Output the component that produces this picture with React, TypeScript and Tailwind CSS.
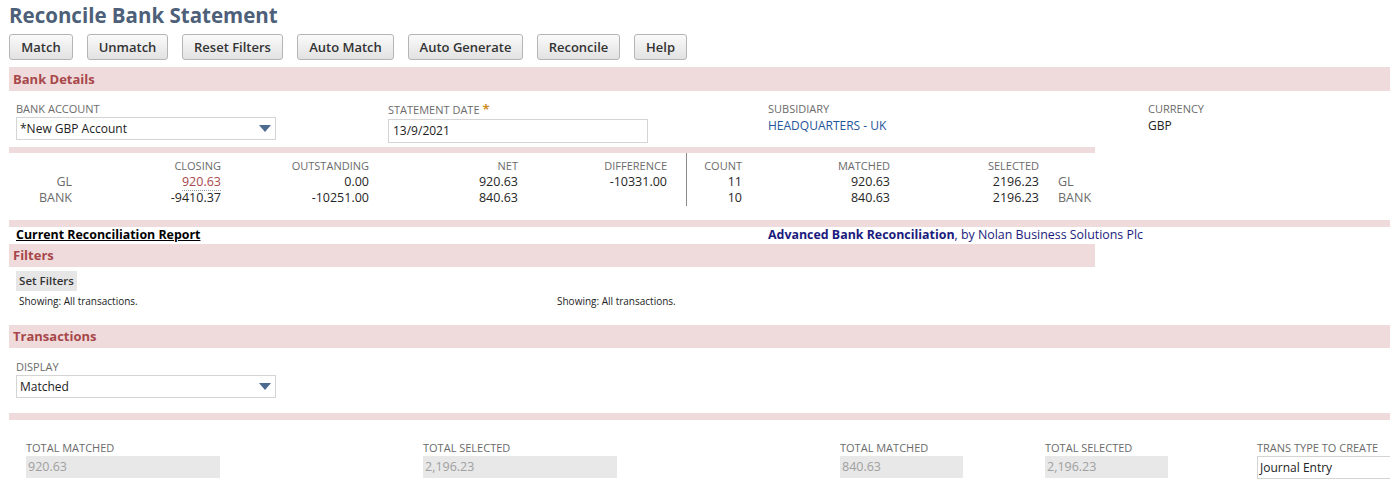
import React from 'react';

const buttons = [
  { label: 'Match', w: 'w-[64px]' },
  { label: 'Unmatch', w: 'w-[81px]' },
  { label: 'Reset Filters', w: 'w-[101px]' },
  { label: 'Auto Match', w: 'w-[97px]' },
  { label: 'Auto Generate', w: 'w-[115px]' },
  { label: 'Reconcile', w: 'w-[83px]' },
  { label: 'Help', w: 'w-[53px]' },
];

const Caret = () => (
  <svg width="12" height="7" viewBox="0 0 12 7" className="shrink-0">
    <polygon points="0,0 12,0 6,7" fill="#4d6a8f" />
  </svg>
);

const Band: React.FC<{ title?: string; className?: string }> = ({ title, className }) => (
  <div className={`bg-[#efdbdc] flex items-center pl-[4px] ${className ?? ''}`}>
    {title && <span className="text-[13px] font-bold text-[#a8474a] leading-none">{title}</span>}
  </div>
);

const Label: React.FC<{ children: React.ReactNode }> = ({ children }) => (
  <div className="text-[11px] uppercase text-[#6b6b6b] leading-[14px]">{children}</div>
);

const Select: React.FC<{ value: string; h: string }> = ({ value, h }) => (
  <div className={`w-[260px] ${h} border border-[#d4d4d4] bg-white flex items-center justify-between pl-[3px] pr-[4px]`}>
    <span className="text-[12px] text-[#222]">{value}</span>
    <Caret />
  </div>
);

const Total: React.FC<{ label: string; value: string; w: string; ml: string }> = ({ label, value, w, ml }) => (
  <div className={`${ml} shrink-0`}>
    <Label>{label}</Label>
    <div className={`${w} h-[22px] mt-[1px] bg-[#e8e8e8] flex items-center pl-[2px] text-[12.5px] text-[#a0a0a0]`}>
      {value}
    </div>
  </div>
);

export default function App() {
  return (
    <div className="w-[1390px] h-[494px] overflow-hidden bg-white font-['Open_Sans',sans-serif] text-[#262626]">
      {/* Title */}
      <h1 className="pl-[9px] pt-[1px] text-[20.5px] font-bold leading-[28px] text-[#4d5f79]">
        Reconcile Bank Statement
      </h1>

      {/* Buttons */}
      <div className="flex pl-[9px] mt-[5px] gap-[14px]">
        {buttons.map((b) => (
          <button
            key={b.label}
            className={`${b.w} h-[26px] rounded-[3px] border border-[#b5b5b5] bg-gradient-to-b from-[#fafafa] to-[#e2e2e2] text-[13px] font-semibold text-[#333] leading-none`}
          >
            {b.label}
          </button>
        ))}
      </div>

      {/* Bank Details */}
      <div className="pl-[9px] mt-[7px]">
        <Band title="Bank Details" className="h-[24px]" />
      </div>

      <div className="flex pl-[16px] pt-[11px]">
        <div className="w-[372px]">
          <Label>Bank Account</Label>
          <div className="mt-[1px]">
            <Select value="*New GBP Account" h="h-[23px]" />
          </div>
        </div>
        <div className="w-[380px]">
          <Label>
            Statement Date <span className="text-[#d38f1f] text-[13px] font-bold">*</span>
          </Label>
          <div className="mt-[2px] w-[260px] h-[24px] border border-[#d4d4d4] flex items-center pl-[4px] text-[12px] text-[#222]">
            13/9/2021
          </div>
        </div>
        <div className="w-[380px]">
          <Label>Subsidiary</Label>
          <div className="text-[12px] text-[#255599] leading-[18px] mt-[1px]">HEADQUARTERS - UK</div>
        </div>
        <div>
          <Label>Currency</Label>
          <div className="text-[12px] text-[#222] leading-[18px] mt-[1px]">GBP</div>
        </div>
      </div>

      <div className="pl-[9px] mt-[4px]">
        <div className="w-[1086px] h-[6px] bg-[#efdbdc]" />
      </div>

      {/* Summary */}
      <div className="flex pt-[5px] text-[12.5px] leading-[16px]">
        <div className="w-[72px] text-right text-[#6b6b6b] pt-[16px]">
          <div>GL</div>
          <div>BANK</div>
        </div>
        <div className="w-[149px] text-right">
          <div className="text-[11px] text-[#6b6b6b]">CLOSING</div>
          <div>
            <span className="text-[#a8474a] border-b border-dotted border-[#999]">920.63</span>
          </div>
          <div>-9410.37</div>
        </div>
        <div className="w-[148px] text-right">
          <div className="text-[11px] text-[#6b6b6b]">OUTSTANDING</div>
          <div>0.00</div>
          <div>-10251.00</div>
        </div>
        <div className="w-[149px] text-right">
          <div className="text-[11px] text-[#6b6b6b]">NET</div>
          <div>920.63</div>
          <div>840.63</div>
        </div>
        <div className="w-[149px] text-right">
          <div className="text-[11px] text-[#6b6b6b]">DIFFERENCE</div>
          <div>-10331.00</div>
        </div>
        <div className="w-[19px]" />
        <div className="w-px bg-[#8a8a8a] h-[53px] -mt-[5px]" />
        <div className="w-[55px] text-right">
          <div className="text-[11px] text-[#6b6b6b]">COUNT</div>
          <div>11</div>
          <div>10</div>
        </div>
        <div className="w-[148px] text-right">
          <div className="text-[11px] text-[#6b6b6b]">MATCHED</div>
          <div>920.63</div>
          <div>840.63</div>
        </div>
        <div className="w-[149px] text-right">
          <div className="text-[11px] text-[#6b6b6b]">SELECTED</div>
          <div>2196.23</div>
          <div>2196.23</div>
        </div>
        <div className="pl-[19px] pt-[16px] text-[#6b6b6b]">
          <div>GL</div>
          <div>BANK</div>
        </div>
      </div>

      <div className="pl-[9px] mt-[14px]">
        <div className="h-[7px] bg-[#efdbdc]" />
      </div>

      {/* Report links */}
      <div className="flex pl-[16px] h-[17px] items-center text-[12.4px]">
        <a className="w-[752px] font-bold text-black underline">Current Reconciliation Report</a>
        <span className="text-[#1b1b7e]">
          <span className="font-bold">Advanced Bank Reconciliation</span>, by Nolan Business Solutions Plc
        </span>
      </div>

      {/* Filters */}
      <div className="pl-[9px]">
        <Band title="Filters" className="w-[1086px] h-[23px]" />
      </div>
      <div className="flex pl-[16px] pt-[4px]">
        <button className="block w-[61px] h-[20px] bg-[#e6e6e6] text-[11.5px] font-semibold text-[#333] leading-none">
          Set Filters
        </button>
      </div>
      <div className="flex pl-[19px] mt-[3px] text-[10px] leading-[14px] text-[#222]">
        <div className="w-[538px]">Showing: All transactions.</div>
        <div>Showing: All transactions.</div>
      </div>

      {/* Transactions */}
      <div className="pl-[9px] mt-[17px]">
        <Band title="Transactions" className="h-[23px]" />
      </div>
      <div className="pl-[16px] pt-[12px]">
        <Label>Display</Label>
        <div className="mt-[1px]">
          <Select value="Matched" h="h-[23px]" />
        </div>
      </div>

      <div className="pl-[9px] mt-[15px]">
        <div className="h-[7px] bg-[#efdbdc]" />
      </div>

      {/* Totals */}
      <div className="flex pt-[21px]">
        <Total label="Total Matched" value="920.63" w="w-[194px]" ml="ml-[26px] w-[397px]" />
        <Total label="Total Selected" value="2,196.23" w="w-[194px]" ml="w-[417px]" />
        <Total label="Total Matched" value="840.63" w="w-[123px]" ml="w-[205px]" />
        <Total label="Total Selected" value="2,196.23" w="w-[123px]" ml="w-[212px]" />
        <div className="shrink-0">
          <Label>Trans Type To Create</Label>
          <div className="w-[140px] h-[23px] mt-[1px] border border-[#d4d4d4] flex items-center pl-[2px] text-[12px] text-[#222]">
            Journal Entry
          </div>
        </div>
      </div>
    </div>
  );
}
